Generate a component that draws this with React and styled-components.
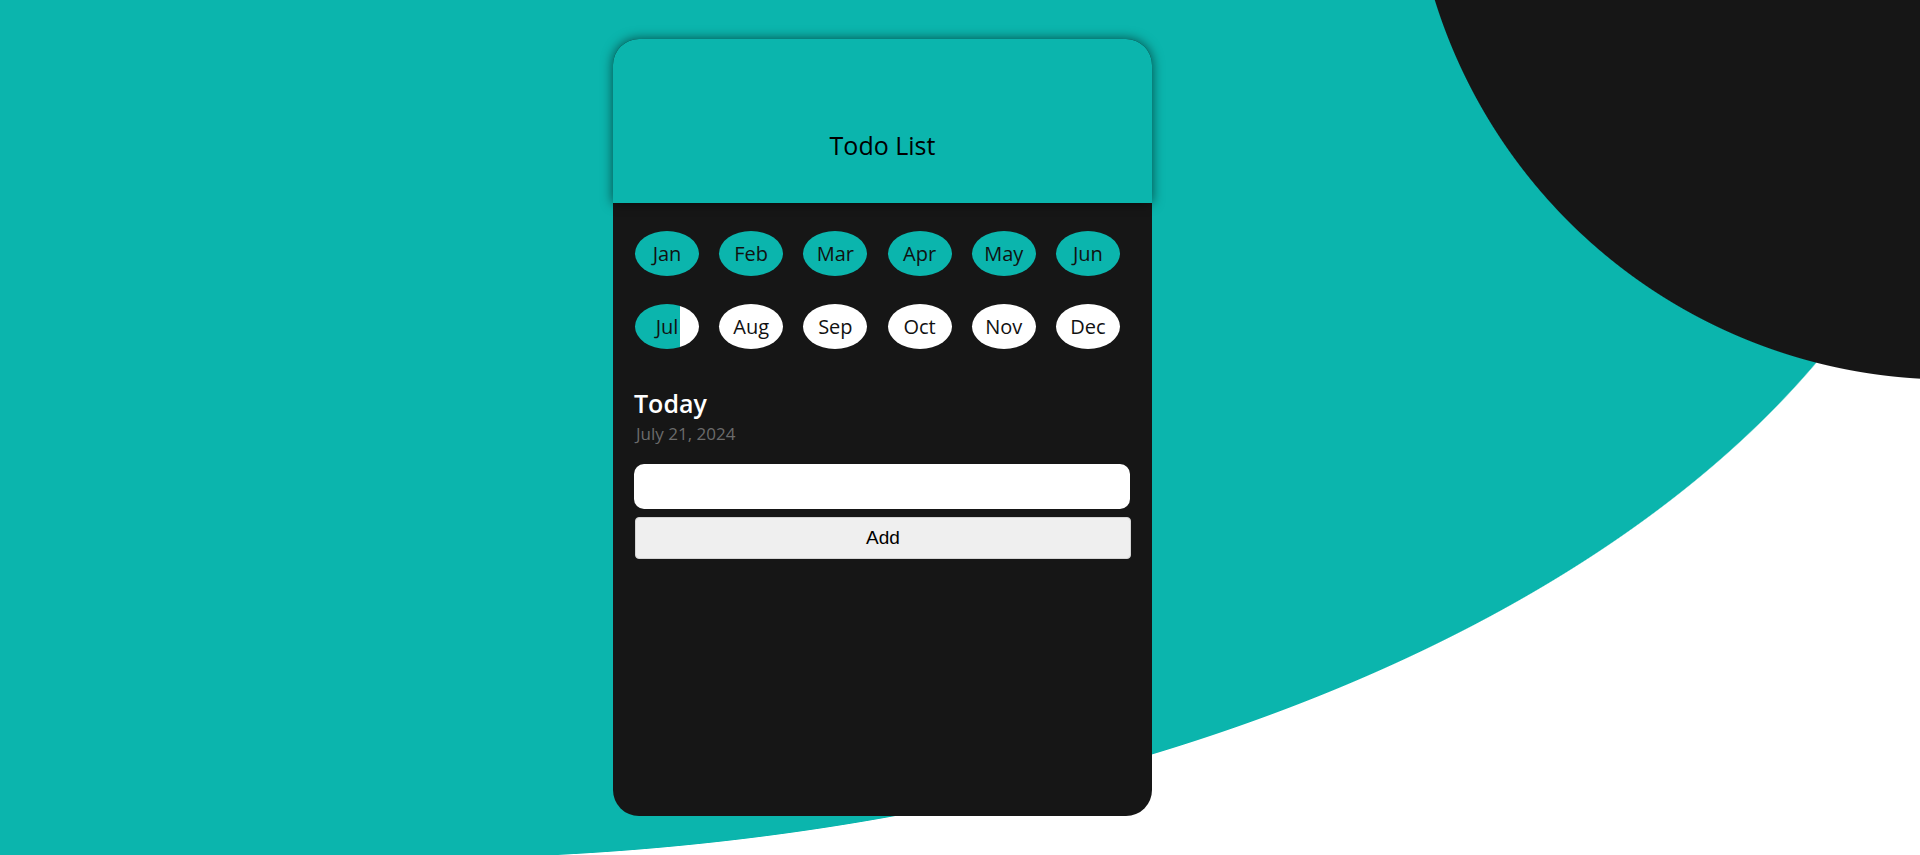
import React from "react";
import styled, { createGlobalStyle } from "styled-components";

const TEAL = "#0bb5ad";
const DARK = "#161616";

const GlobalStyle = createGlobalStyle`
  html, body {
    margin: 0;
    padding: 0;
  }
  body {
    font-family: "Open Sans", "Noto Sans", sans-serif;
    background: #ffffff;
  }
  * { box-sizing: border-box; }
`;

const Page = styled.div`
  min-height: 100vh;
  padding: 39px 0 0 613px;
  overflow: hidden;
  background:
    radial-gradient(circle 540px at 1950px -160px, ${DARK} calc(100% - 1px), transparent 100%) no-repeat,
    radial-gradient(ellipse 1551px 869px at 416px -10px, ${TEAL} calc(100% - 1.5px), transparent 100%) no-repeat,
    linear-gradient(${TEAL}, ${TEAL}) 0 0 / 417px 859px no-repeat,
    #ffffff;
`;

const Card = styled.div`
  width: 539px;
  height: 777px;
  background: ${DARK};
  border-radius: 26px;
  display: flex;
  flex-direction: column;
`;

const Header = styled.header`
  position: relative;
  z-index: 1;
  height: 164px;
  padding-top: 47px;
  background: ${TEAL};
  border-radius: 26px 26px 0 0;
  box-shadow: 0 0 12px rgba(0, 0, 0, 0.6);
  display: flex;
  align-items: center;
  justify-content: center;
`;

const Title = styled.h1`
  margin: 0;
  font-size: 25px;
  line-height: 32px;
  font-weight: 500;
  color: #000;
`;

const Body = styled.main`
  padding: 28px 22px 0 21px;
`;

const MonthGrid = styled.div`
  display: grid;
  grid-template-columns: repeat(6, 64px);
  column-gap: 20.2px;
  row-gap: 28px;
  padding-left: 1px;
`;

const MonthPill = styled.div`
  width: 64px;
  height: 45px;
  border-radius: 50%;
  display: flex;
  align-items: center;
  justify-content: center;
  padding-bottom: 1px;
  font-size: 20px;
  color: #111;
  background: ${({ $state }) =>
    $state === "past"
      ? TEAL
      : $state === "current"
      ? `linear-gradient(to right, ${TEAL} 70%, #ffffff 70%)`
      : "#ffffff"};
`;

const TodaySection = styled.section`
  margin-top: 39px;
`;

const TodayTitle = styled.h2`
  margin: 0;
  font-size: 25px;
  line-height: 30px;
  font-weight: 600;
  color: #ffffff;
`;

const DateText = styled.p`
  margin: 5px 0 0 2px;
  font-size: 17px;
  line-height: 22px;
  color: #6b6b6b;
`;

const Form = styled.form`
  margin-top: 19px;
  display: flex;
  flex-direction: column;
  gap: 8px;
`;

const TaskInput = styled.input`
  width: 496px;
  height: 45px;
  border: none;
  border-radius: 10px;
  background: #ffffff;
  padding: 0 12px;
  font-size: 17px;
  font-family: inherit;
  outline: none;
`;

const AddButton = styled.button`
  width: 496px;
  height: 42px;
  margin-left: 1px;
  background: #efefef;
  border: 1px solid #d4d4d4;
  border-radius: 4px;
  font-family: "Liberation Sans", Arial, sans-serif;
  font-size: 19px;
  color: #000;
  cursor: pointer;
`;

const MONTHS = ["Jan", "Feb", "Mar", "Apr", "May", "Jun", "Jul", "Aug", "Sep", "Oct", "Nov", "Dec"];
const CURRENT = 6;

export default function App() {
  return (
    <>
      <GlobalStyle />
      <Page>
        <Card>
          <Header>
            <Title>Todo List</Title>
          </Header>
          <Body>
            <MonthGrid>
              {MONTHS.map((m, i) => (
                <MonthPill
                  key={m}
                  $state={i < CURRENT ? "past" : i === CURRENT ? "current" : "future"}
                >
                  {m}
                </MonthPill>
              ))}
            </MonthGrid>
            <TodaySection>
              <TodayTitle>Today</TodayTitle>
              <DateText>July 21, 2024</DateText>
              <Form onSubmit={(e) => e.preventDefault()}>
                <TaskInput type="text" />
                <AddButton type="submit">Add</AddButton>
              </Form>
            </TodaySection>
          </Body>
        </Card>
      </Page>
    </>
  );
}
